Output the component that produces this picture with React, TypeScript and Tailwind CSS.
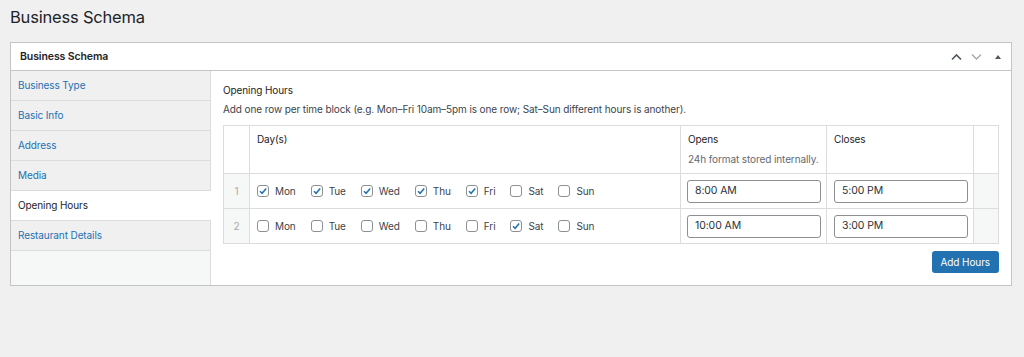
import React from 'react';

const tabs = ['Business Type', 'Basic Info', 'Address', 'Media', 'Opening Hours', 'Restaurant Details'];
const days = ['Mon', 'Tue', 'Wed', 'Thu', 'Fri', 'Sat', 'Sun'];

const rows = [
  { checked: ['Mon', 'Tue', 'Wed', 'Thu', 'Fri'], opens: '8:00 AM', closes: '5:00 PM' },
  { checked: ['Sat'], opens: '10:00 AM', closes: '3:00 PM' },
];

function Check({ on }: { on: boolean }) {
  return (
    <span className="flex h-[12px] w-[12px] items-center justify-center rounded-[3px] border border-[#8c8f94] bg-white">
      {on && (
        <svg width="10" height="10" viewBox="0 0 10 10">
          <path d="M2 5.2 L4.1 7.3 L8.2 2.4" fill="none" stroke="#2271b1" strokeWidth="1.5" />
        </svg>
      )}
    </span>
  );
}

export default function App() {
  return (
    <div className="min-h-[357px] bg-[#f0f0f1] px-[10px] pt-[6px] font-['Inter',sans-serif] text-[10px] tracking-[-0.1px] text-[#1d2327]">
      <h1 className="text-[16.5px] leading-[22px] font-normal tracking-[-0.2px]">Business Schema</h1>

      <div className="mt-[14px] w-[1002px] border border-[#c3c4c7] bg-white">
        {/* header */}
        <div className="flex h-[28px] items-center justify-between border-b border-[#c3c4c7] pl-[9px] pr-[8px]">
          <span className="text-[10.5px] font-semibold">Business Schema</span>
          <div className="flex items-center gap-[9px]">
            <svg width="11" height="8" viewBox="0 0 11 8">
              <path d="M1 6.5 L5.5 2 L10 6.5" fill="none" stroke="#50575e" strokeWidth="1.6" />
            </svg>
            <svg width="11" height="8" viewBox="0 0 11 8">
              <path d="M1 1.5 L5.5 6 L10 1.5" fill="none" stroke="#a7aaad" strokeWidth="1.4" />
            </svg>
            <svg width="10" height="8" viewBox="0 0 10 8" className="ml-[2px]">
              <path d="M2 6 L5 2 L8 6 Z" fill="#50575e" />
            </svg>
          </div>
        </div>

        <div className="flex">
          {/* side tabs */}
          <div className="flex w-[200px] flex-col border-r border-[#dcdcde] bg-[#f6f7f7]">
            {tabs.map((t) => (
              <div
                key={t}
                className={`flex h-[30px] items-center border-b border-[#dcdcde] pl-[7px] ${
                  t === 'Opening Hours' ? 'mr-[-1px] bg-white text-[#1d2327]' : 'bg-[#f0f0f1] text-[#2271b1]'
                }`}
              >
                {t}
              </div>
            ))}
          </div>

          {/* content */}
          <div className="flex-1 px-[12px] pt-[12px] pb-[12px]">
            <div className="leading-[14px] text-[#1d2327]">Opening Hours</div>
            <div className="mt-[5px] leading-[14px] text-[#3c434a]">
              Add one row per time block (e.g. Mon–Fri 10am–5pm is one row; Sat–Sun different hours is another).
            </div>

            <table className="mt-[9px] w-[776px] border-collapse border border-[#dcdcde]">
              <thead>
                <tr className="h-[48px] border-b border-[#dcdcde] align-top">
                  <th className="w-[26px] border-r border-[#dcdcde]"></th>
                  <th className="pl-[7px] pt-[6px] text-left font-normal">Day(s)</th>
                  <th className="w-[146px] border-l border-[#dcdcde] pl-[7px] pt-[6px] text-left font-normal whitespace-nowrap">
                    <div>Opens</div>
                    <div className="mt-[5px] text-[#646970]">24h format stored internally.</div>
                  </th>
                  <th className="w-[147px] border-l border-[#dcdcde] pl-[7px] pt-[6px] text-left font-normal">Closes</th>
                  <th className="w-[25px] border-l border-[#dcdcde]"></th>
                </tr>
              </thead>
              <tbody>
                {rows.map((r, i) => (
                  <tr key={i} className={`h-[35px] ${i === 0 ? 'border-b border-[#dcdcde]' : ''}`}>
                    <td className="border-r border-[#dcdcde] bg-[#f6f7f7] text-center text-[#a7aaad]">{i + 1}</td>
                    <td className="pl-[7px]">
                      <div className="flex items-center gap-[15px]">
                        {days.map((d) => (
                          <label key={d} className="flex items-center gap-[6px] text-[#3c434a]">
                            <Check on={r.checked.includes(d)} />
                            {d}
                          </label>
                        ))}
                      </div>
                    </td>
                    <td className="border-l border-[#dcdcde] pl-[6px]">
                      <div className="flex h-[23px] w-[134px] items-center rounded-[3px] border border-[#8c8f94] pl-[7px] text-[10.5px] text-[#2c3338]">
                        {r.opens}
                      </div>
                    </td>
                    <td className="border-l border-[#dcdcde] pl-[7px]">
                      <div className="flex h-[23px] w-[134px] items-center rounded-[3px] border border-[#8c8f94] pl-[7px] text-[10.5px] text-[#2c3338]">
                        {r.closes}
                      </div>
                    </td>
                    <td className="border-l border-[#dcdcde] bg-[#f6f7f7]"></td>
                  </tr>
                ))}
              </tbody>
            </table>

            <div className="mt-[7px] flex w-[776px] justify-end">
              <button className="h-[22px] rounded-[3px] bg-[#2271b1] px-[9px] text-white">Add Hours</button>
            </div>
          </div>
        </div>
      </div>
    </div>
  );
}
